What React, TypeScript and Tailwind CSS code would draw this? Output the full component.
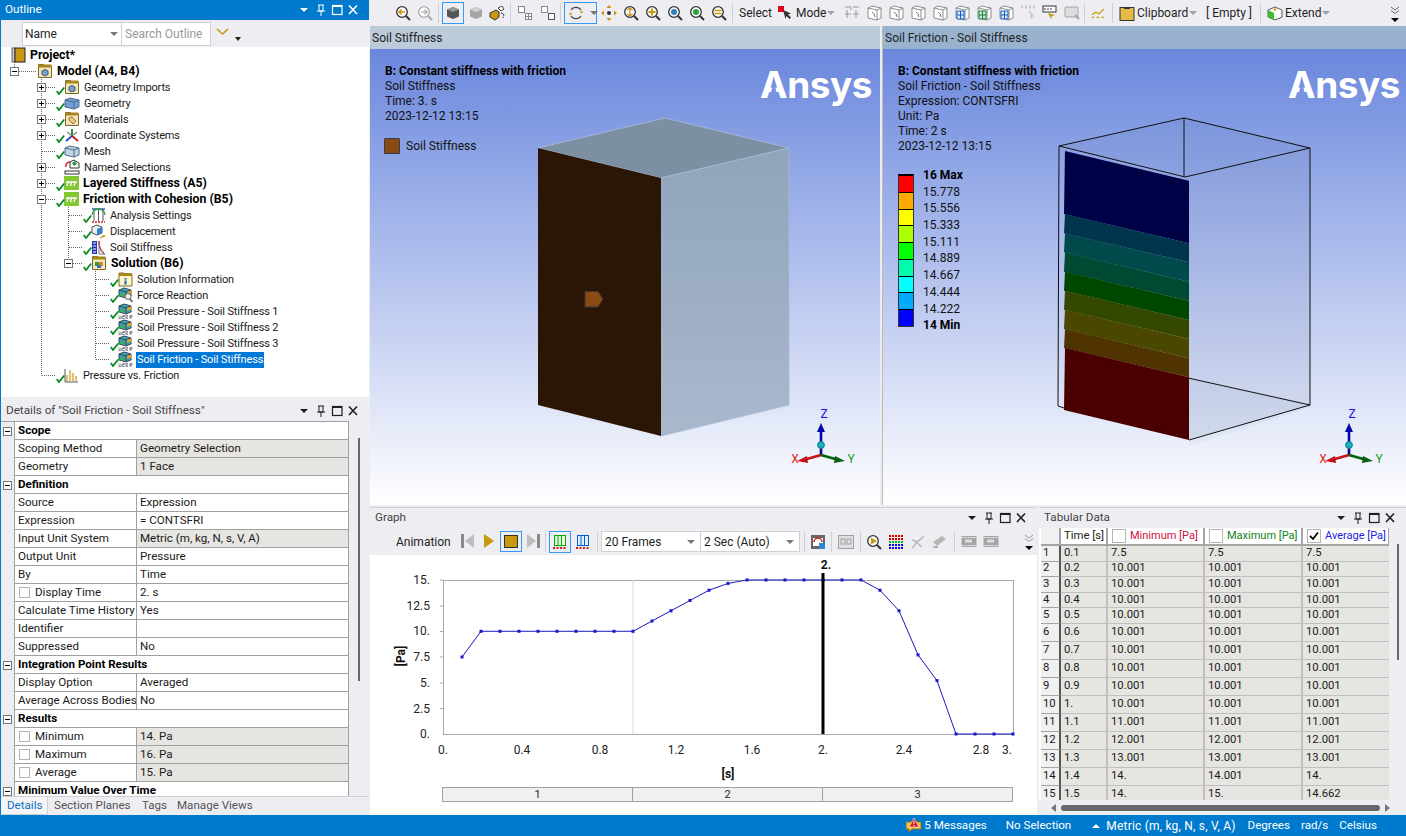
import React from "react";

const FONT = "font-['Roboto','Noto_Sans','Liberation_Sans',sans-serif]";

function Check({ x = 0 }: { x?: number }) {
  return (
    <svg width="9" height="9" viewBox="0 0 9 9" className="absolute" style={{ left: x, top: 7 }}>
      <path d="M0.8 5 L3 8 L8.2 1.5" fill="none" stroke="#0a8a1e" strokeWidth="1.8" />
    </svg>
  );
}

type IconKind =
  | "book" | "folderCube" | "folderGeo" | "cubeBlue" | "folderMat" | "coords" | "mesh" | "named" | "greenBar"
  | "analysis" | "disp" | "stiff" | "folderSol" | "info" | "force" | "user" | "chart";

function TreeIcon({ kind }: { kind: IconKind }) {
  const c = "shrink-0";
  const folder = (inner: React.ReactNode) => (
    <svg width="16" height="16" viewBox="0 0 16 16" className={c}>
      <path d="M1.5 1.5h5l1 1.5h7v11.5h-13z" fill="#f5e6b8" stroke="#7a6a30" />
      <rect x="1.5" y="1.5" width="13" height="3" fill="#a8861c" />
      {inner}
    </svg>
  );
  switch (kind) {
    case "book":
      return (
        <svg width="15" height="16" viewBox="0 0 15 16" className={c}>
          <rect x="1" y="1" width="3" height="14" fill="#c8c8c8" stroke="#666" />
          <rect x="4" y="1" width="10" height="14" fill="#c8980f" stroke="#222" />
        </svg>
      );
    case "folderCube":
    case "folderGeo":
      return folder(<path d="M5 8l3-1.5 3 1.5v3.5l-3 1.5-3-1.5z" fill="#7ba0c8" stroke="#37567a" />);
    case "folderMat":
      return folder(<path d="M5 7l3-1 4 4-3 3-4-4z" fill="#e8c48a" stroke="#a07830" />);
    case "folderSol":
      return folder(
        <g>
          <rect x="4" y="7" width="4" height="4" fill="#3a9a3a" />
          <rect x="8" y="7" width="4" height="4" fill="#d88a20" />
          <rect x="6" y="10" width="4" height="3" fill="#3070c0" />
        </g>,
      );
    case "cubeBlue":
    case "mesh":
      return (
        <svg width="16" height="13" viewBox="0 0 16 13" className={c}>
          <path d="M1 3l5-2 9 2-0 7-5 2-9-2z" fill={kind === "mesh" ? "#c3d3e4" : "#6f9fd4"} stroke="#4c6a8c" />
          <path d="M1 3l9 2 5-2M10 5v7" fill="none" stroke="#4c6a8c" />
        </svg>
      );
    case "coords":
      return (
        <svg width="16" height="16" viewBox="0 0 16 16" className={c}>
          <path d="M8 9V2" stroke="#2a9a3a" strokeWidth="2" />
          <path d="M8 9L2 14" stroke="#2a50c8" strokeWidth="2" />
          <path d="M8 9l6 5" stroke="#d02020" strokeWidth="2" />
          <path d="M3 5l4 3M13 5L9 8" stroke="#888" strokeWidth="1.5" />
        </svg>
      );
    case "named":
      return (
        <svg width="16" height="16" viewBox="0 0 16 16" className={c}>
          <path d="M6 3l4-2 5 3v5H6z" fill="#fff" stroke="#333" />
          <path d="M8 4l3-2 2 3-3 2z" fill="#2a9a3a" />
          <path d="M2 8a4 4 0 014-5" fill="none" stroke="#d02020" strokeWidth="1.5" />
          <rect x="1" y="12" width="14" height="3" fill="#fff" stroke="#333" />
        </svg>
      );
    case "greenBar":
      return (
        <svg width="15" height="14" viewBox="0 0 15 14" className={c}>
          <rect width="15" height="14" fill="#82c832" />
          <path d="M2 6h11M4 6l-1 4M7.5 6l-1 4M11 6l-1 4" stroke="#fff" strokeWidth="1.3" fill="none" />
        </svg>
      );
    case "analysis":
      return (
        <svg width="15" height="15" viewBox="0 0 15 15" className={c}>
          <path d="M1 1h13" stroke="#1030d0" strokeWidth="1.2" />
          <path d="M3 1v12M7.5 1v12M12 1v12" stroke="#555" />
          <path d="M1 7a6.5 6 0 0113 0" fill="none" stroke="#20a040" strokeWidth="1.3" />
          <path d="M1 14h13" stroke="#d02020" strokeWidth="1.3" strokeDasharray="2 1" />
        </svg>
      );
    case "disp":
      return (
        <svg width="15" height="15" viewBox="0 0 15 15" className={c}>
          <path d="M1 3l5-2 5 2v6l-5 2-5-2z" fill="#eee" stroke="#555" />
          <path d="M6 5l5-2v6l-5 2z" fill="#3080d0" />
          <path d="M9 14l5-2-3 0" stroke="#c8980f" strokeWidth="1.3" fill="none" />
        </svg>
      );
    case "stiff":
      return (
        <svg width="15" height="15" viewBox="0 0 15 15" className={c}>
          <rect x="1" y="1" width="5" height="13" fill="#2030c0" />
          <path d="M2 3h3M2 6h3M2 9h3M2 12h3" stroke="#fff" />
          <path d="M8 1c0 8 2 12 6 13H8z" fill="none" stroke="#777" />
          <path d="M8 1c0 6 2 9 5 12" fill="none" stroke="#c03030" />
        </svg>
      );
    case "info":
      return (
        <svg width="15" height="15" viewBox="0 0 15 15" className={c}>
          <path d="M1 1h5l1 1.5h7V14H1z" fill="#fdf5c8" stroke="#7a6a30" />
          <rect x="1" y="1" width="13" height="3" fill="#a8861c" />
          <rect x="6.5" y="6" width="2" height="1.5" fill="#1060c0" />
          <rect x="6.5" y="8.5" width="2" height="4" fill="#1060c0" />
        </svg>
      );
    case "force":
    case "user":
      return (
        <svg width="15" height="16" viewBox="0 0 15 16" className={c}>
          <path d="M1 3l5-2 7 2v6l-5 2-7-2z" fill="#2aa8c0" stroke="#445" />
          <path d="M1 3l7 2 5-2" fill="none" stroke="#445" />
          <path d="M8 5v6" stroke="#445" />
          <path d="M9 5l4-1.5v3l-4 1.5z" fill="#e8a020" />
          <path d="M2 6l5 1.5v2.5l-5-1.5z" fill="#40b050" />
          {kind === "force" ? (
            <g>
              <circle cx="10" cy="9.5" r="3" fill="#eee" stroke="#666" />
              <path d="M12 12l2.5 3" stroke="#555" strokeWidth="1.5" />
            </g>
          ) : (
            <path d="M1 12.5v3h2v-3M4.5 12.5h2v1h-2v2h2M8 12.5H10M8 14H10M8 15.5H10M8 12.5v3M12 15.5v-3h2v1.5h-2l2 1.5" fill="none" stroke="#556" strokeWidth=".7" />
          )}
        </svg>
      );
    default:
      return (
        <svg width="15" height="15" viewBox="0 0 15 15" className={c}>
          <path d="M1 1v13h13" fill="none" stroke="#555" />
          <path d="M3 13V7M6 13V2M9 13V5M12 13V8" stroke="#c8980f" strokeWidth="1.2" />
        </svg>
      );
  }
}

type Row = { label: string; pad: string; icon: IconKind; bold?: boolean; check?: number; sel?: boolean };
const tree: Row[] = [
  { label: "Project*", pad: "pl-[10px]", icon: "book", bold: true },
  { label: "Model (A4, B4)", pad: "pl-[36px]", icon: "folderCube", bold: true },
  { label: "Geometry Imports", pad: "pl-[63px]", icon: "folderGeo", check: 55 },
  { label: "Geometry", pad: "pl-[63px]", icon: "cubeBlue", check: 55 },
  { label: "Materials", pad: "pl-[63px]", icon: "folderMat", check: 55 },
  { label: "Coordinate Systems", pad: "pl-[63px]", icon: "coords", check: 55 },
  { label: "Mesh", pad: "pl-[63px]", icon: "mesh", check: 55 },
  { label: "Named Selections", pad: "pl-[63px]", icon: "named" },
  { label: "Layered Stiffness (A5)", pad: "pl-[63px]", icon: "greenBar", bold: true, check: 55 },
  { label: "Friction with Cohesion (B5)", pad: "pl-[63px]", icon: "greenBar", bold: true, check: 55 },
  { label: "Analysis Settings", pad: "pl-[90px]", icon: "analysis", check: 82 },
  { label: "Displacement", pad: "pl-[90px]", icon: "disp", check: 82 },
  { label: "Soil Stiffness", pad: "pl-[90px]", icon: "stiff", check: 82 },
  { label: "Solution (B6)", pad: "pl-[90px]", icon: "folderSol", bold: true, check: 82 },
  { label: "Solution Information", pad: "pl-[117px]", icon: "info", check: 109 },
  { label: "Force Reaction", pad: "pl-[117px]", icon: "force", check: 109 },
  { label: "Soil Pressure - Soil Stiffness 1", pad: "pl-[117px]", icon: "user", check: 109 },
  { label: "Soil Pressure - Soil Stiffness 2", pad: "pl-[117px]", icon: "user", check: 109 },
  { label: "Soil Pressure - Soil Stiffness 3", pad: "pl-[117px]", icon: "user", check: 109 },
  { label: "Soil Friction - Soil Stiffness", pad: "pl-[117px]", icon: "user", check: 109, sel: true },
  { label: "Pressure vs. Friction", pad: "pl-[63px]", icon: "chart", check: 55 },
];

function TreeLines() {
  const box = (x: number, y: number, plus: boolean, k: string) => (
    <g key={k}>
      <rect x={x + 0.5} y={y + 0.5} width="8" height="8" fill="#fff" stroke="#777" />
      <path d={`M${x + 2} ${y + 4.5}h5`} stroke="#000" />
      {plus && <path d={`M${x + 4.5} ${y + 2}v5`} stroke="#000" />}
    </g>
  );
  const dots = { stroke: "#666", strokeDasharray: "1 1", fill: "none" };
  const top = 47;
  const rowY = (i: number) => 8 + i * 16;
  return (
    <svg width="370" height="340" className="absolute left-0 top-0 pointer-events-none">
      <g {...dots}>
        <path d={`M13.5 ${62 - top}v5`} />
        <path d={`M40.5 ${rowY(1) + 6}V${rowY(20) + 0.5}`} />
        <path d={`M67.5 ${rowY(9) + 6}V${rowY(13)}`} />
        <path d={`M94.5 ${rowY(13) + 6}V${rowY(19) + 0.5}`} />
        <path d={`M18 ${rowY(1) + 0.5}h17`} />
        {[2, 3, 4, 5, 6, 7, 8, 9, 20].map((i) => (
          <path key={i} d={`M41 ${rowY(i) + 0.5}h14`} />
        ))}
        {[10, 11, 12, 13].map((i) => (
          <path key={i} d={`M68 ${rowY(i) + 0.5}h14`} />
        ))}
        {[14, 15, 16, 17, 18, 19].map((i) => (
          <path key={i} d={`M95 ${rowY(i) + 0.5}h14`} />
        ))}
      </g>
      {box(9, rowY(1) - 4, false, "m")}
      {[2, 3, 4, 5, 7, 8].map((i) => box(36, rowY(i) - 4, true, "a" + i))}
      {box(36, rowY(9) - 4, false, "f")}
      {box(63, rowY(13) - 4, false, "s")}
    </svg>
  );
}

function Outline() {
  return (
    <div className="relative bg-white h-[350px] overflow-hidden leading-4">
      <TreeLines />
      <div className="relative">
        {tree.map((r) => (
          <div key={r.label} className={`relative flex items-center h-4 gap-[3px] ${r.pad}`}>
            {r.check !== undefined && <Check x={r.check} />}
            <TreeIcon kind={r.icon} />
            <span
              className={`px-[1px] whitespace-nowrap ${r.bold ? "font-bold text-black text-[12.3px]" : "text-[#1a1a1a] text-[11px] tracking-[-0.15px] h-4 translate-y-px"} ${
                r.sel ? "bg-[#0078d7] text-white" : ""
              }`}
            >
              {r.label}
            </span>
          </div>
        ))}
      </div>
    </div>
  );
}

function PanelButtons({ dark }: { dark?: boolean }) {
  const col = dark ? "#fff" : "#1e1e1e";
  return (
    <svg width="60" height="14" viewBox="0 0 60 14" className="shrink-0">
      <path d="M1 5h8l-4 4z" fill={col} />
      <path d="M19 2h6M20 2v6h4V2M18 8h8M22 8v5" stroke={col} fill="none" />
      <rect x="33.5" y="2.5" width="9.5" height="9" fill="none" stroke={col} strokeWidth="1.2" />
      <path d="M33 3h10" stroke={col} strokeWidth="2" />
      <path d="M50 2.5l8 8.5M58 2.5l-8 8.5" stroke={col} strokeWidth="1.6" />
    </svg>
  );
}

function Title({ text, active, cls = "" }: { text: string; active?: boolean; cls?: string }) {
  return (
    <div
      className={`flex items-center h-5 pl-[5px] pr-[10px] gap-[4px] shrink-0 text-[11.7px] ${
        active ? "bg-[#007acc] text-white" : "bg-[#eeeef2] text-[#444]"
      } ${cls}`}
    >
      <span className="whitespace-nowrap">{text}</span>
      <div
        className={`flex-1 h-[5px] bg-[radial-gradient(circle,#9a9aa0_0.6px,transparent_0.7px)] bg-[length:2px_2px] ${
          active ? "opacity-60" : ""
        }`}
      />
      <PanelButtons dark={active} />
    </div>
  );
}

function Grip() {
  return <div className="w-[5px] h-5 mx-[2px] bg-[radial-gradient(circle,#8a8a8a_0.6px,transparent_0.7px)] bg-[length:2px_2px] shrink-0" />;
}
function Sep({ cls = "mx-[3px]" }: { cls?: string }) {
  return <div className={`w-px h-[20px] bg-[#cfcfd6] shrink-0 ${cls}`} />;
}
function Caret({ light }: { light?: boolean }) {
  return <span className={`inline-block w-0 h-0 border-x-[4px] border-x-transparent border-t-[4px] ${light ? "border-t-[#a0a0a8]" : "border-t-[#777]"} shrink-0`} />;
}

function Mag({ color = "#c8980f", inner, dim }: { color?: string; inner?: React.ReactNode; dim?: boolean }) {
  const s = dim ? "#a8a8a8" : "#333";
  return (
    <svg width="16" height="16" viewBox="0 0 16 16" className="shrink-0">
      <circle cx="7" cy="7" r="5.3" fill="#fff" stroke={s} strokeWidth="1.3" />
      {inner ?? <path d="M3.5 7h7" stroke={dim ? "#bbb" : color} strokeWidth="2" />}
      <path d="M11 11l4 4" stroke={s} strokeWidth="2" />
    </svg>
  );
}

function Cube({ fill = "#555", top = "#999", dim }: { fill?: string; top?: string; dim?: boolean }) {
  return (
    <svg width="14" height="14" viewBox="0 0 14 14" className={dim ? "shrink-0 opacity-60" : "shrink-0"}>
      <path d="M1 3.5L7 1l6 2.5v7L7 13l-6-2.5z" fill={fill} />
      <path d="M1 3.5L7 1l6 2.5L7 6z" fill={top} />
    </svg>
  );
}

function GrayIcon({ k }: { k: number }) {
  return (
    <svg width="17" height="16" viewBox="0 0 17 16" className="shrink-0">
      <path d="M2 3l4-2 9 2v10l-4 2-9-2z" fill="#fff" stroke="#8c8c8c" />
      <path d="M2 3l9 2 4-2M11 5v10" fill="none" stroke="#8c8c8c" />
      {k === 1 && <path d="M3 6l5 1v6l-5-1z" fill="#bbb" />}
      {k === 2 && <path d="M3 6h7v8H3z" fill="#dfe8f5" stroke="#1060c0" />}
      {k === 2 && <path d="M6.5 6v8M3 10h7" stroke="#1060c0" />}
      {k === 3 && <path d="M3 6h7v8H3z" fill="#cfe8cf" stroke="#108040" />}
      {k === 3 && <path d="M6.5 6v8M3 10h7" stroke="#108040" />}
      {k === 0 && <path d="M6 7l3 3-1 0 1 2" stroke="#777" fill="none" />}
    </svg>
  );
}

function MainToolbar() {
  return (
    <div className="flex items-center h-[26px] bg-[#eeeef2] pl-[10px] pr-[3px] shrink-0 text-[12px] text-[#1e1e1e]">
      <Grip />
      <div className="flex items-center gap-[6px] ml-[6px]">
        <Mag inner={<path d="M10 7H4M6.5 4.5L4 7l2.5 2.5" fill="none" stroke="#c8980f" strokeWidth="1.6" />} />
        <Mag dim inner={<path d="M4 7h6M7.5 4.5L10 7l-2.5 2.5" fill="none" stroke="#bbb" strokeWidth="1.6" />} />
      </div>
      <Sep cls="ml-[5px] mr-[3px]" />
      <div className="flex items-center justify-center w-[22px] h-[22px] border border-[#3399ff]">
        <Cube />
      </div>
      <div className="flex items-center gap-[6px] ml-[5px]">
        <Cube fill="#a5a5a5" top="#cfcfcf" />
        <svg width="16" height="16" viewBox="0 0 16 16" className="shrink-0">
          <path d="M1 8l6-3 3 2v5l-4 3-5-3z" fill="#c8980f" stroke="#333" />
          <path d="M9 3l4-2 2 3-3 2z" fill="#fff" stroke="#444" />
          <path d="M12 8l3 1-1 4" stroke="#333" fill="none" strokeDasharray="2 1" />
        </svg>
      </div>
      <Sep cls="ml-[5px] mr-[6px]" />
      <div className="flex items-center gap-[7px]">
        <svg width="16" height="16" viewBox="0 0 16 16" className="shrink-0">
          <rect x="1.5" y="1.5" width="6" height="6" fill="#fff" stroke="#888" />
          <rect x="8.5" y="8.5" width="6" height="6" fill="#fff" stroke="#888" />
          <path d="M11.5 8.5v6M8.5 11.5h6" stroke="#888" />
        </svg>
        <svg width="16" height="16" viewBox="0 0 16 16" className="shrink-0">
          <rect x="1.5" y="1.5" width="6" height="6" fill="#fff" stroke="#888" />
          <rect x="8.5" y="8.5" width="6" height="6" fill="#fff" stroke="#555" />
        </svg>
      </div>
      <Sep cls="ml-[4px] mr-[3px]" />
      <div className="flex items-center gap-[6px] w-[33px] h-[22px] pl-[3px] border border-[#3399ff]">
        <svg width="16" height="16" viewBox="0 0 16 16" className="shrink-0">
          <path d="M3 5a6 6 0 0110 0M13 11a6 6 0 01-10 0" fill="none" stroke="#444" strokeWidth="1.3" />
          <circle cx="2.5" cy="9" r="1.2" fill="#c8980f" />
          <circle cx="13.5" cy="7" r="1.2" fill="#c8980f" />
        </svg>
        <Caret />
      </div>
      <div className="flex items-center gap-[6px] ml-[4px]">
        <svg width="16" height="16" viewBox="0 0 16 16" className="shrink-0">
          <circle cx="8" cy="8" r="2" fill="#333" />
          <path d="M8 0l2.5 3h-5zM8 16l2.5-3h-5zM0 8l3 2.5v-5zM16 8l-3 2.5v-5z" fill="#c8980f" />
        </svg>
        <Mag inner={<path d="M7 3.5v7M4.5 5L7 3l2.5 2M4.5 9L7 11l2.5-2" fill="none" stroke="#c8980f" strokeWidth="1.3" />} />
        <Mag inner={<path d="M3.5 7h7M7 3.5v7" stroke="#c8980f" strokeWidth="2" />} />
        <Mag inner={<circle cx="7" cy="7" r="3" fill="#3080c0" />} />
        <Mag inner={<circle cx="7" cy="7" r="3" fill="#30a040" />} />
        <Mag inner={<path d="M3.5 5.5h7M3.5 8.5h7" stroke="#c8980f" strokeWidth="1.6" />} />
      </div>
      <Sep cls="ml-[5px] mr-[6px]" />
      <span className="w-[32px]">Select</span>
      <svg width="14" height="14" viewBox="0 0 14 14" className="shrink-0 ml-[7px]">
        <rect x="0" y="0" width="6" height="6" fill="#e8001c" />
        <path d="M5 4l8 3.5-3 1 3 3-1.5 1.5-3-3-1 3z" fill="#333" />
      </svg>
      <span className="ml-[4px] w-[31px]">Mode</span>
      <Caret light />
      <div className="flex items-center gap-[5px] ml-[9px]">
        <svg width="17" height="16" viewBox="0 0 17 16" className="shrink-0">
          <path d="M1 2h6v3M9 2h6M1 9h6M9 9h6M3 5v8M12 5v8" stroke="#999" fill="none" />
        </svg>
        {[0, 0, 0, 0, 2, 3, 2].map((k, i) => (
          <GrayIcon key={i} k={k} />
        ))}
        <svg width="17" height="16" viewBox="0 0 17 16" className="shrink-0">
          <path d="M9 6l4 5-2 0 1 3" stroke="#c8c8c8" fill="none" strokeWidth="1.5" />
          <path d="M1 2h14" stroke="#c8c8c8" strokeDasharray="2 2" strokeWidth="3" />
        </svg>
        <svg width="17" height="16" viewBox="0 0 17 16" className="shrink-0">
          <rect x="1" y="1" width="13" height="6" fill="#fff" stroke="#333" />
          <path d="M3 3v2M6 3v2M9 3v2" stroke="#333" />
          <path d="M6 8l3 6 1-3 3-1z" fill="#c8980f" />
        </svg>
        <svg width="17" height="16" viewBox="0 0 17 16" className="shrink-0">
          <rect x="1" y="2" width="13" height="10" rx="1" fill="#ddd" stroke="#a5a5a5" />
          <path d="M11 10l4 4" stroke="#a5a5a5" strokeWidth="2" />
        </svg>
      </div>
      <Sep cls="ml-[3px] mr-[6px]" />
      <svg width="16" height="14" viewBox="0 0 20 14" className="shrink-0">
        <path d="M1 9l5-3 4 2 6-6" stroke="#c8980f" fill="none" strokeWidth="1.5" />
        <path d="M1 12.5h18" stroke="#c8980f" strokeWidth="1.5" strokeDasharray="3 3" />
      </svg>
      <Sep cls="ml-[5px] mr-[6px]" />
      <svg width="16" height="15" viewBox="0 0 16 15" className="shrink-0">
        <rect x="1" y="1.5" width="14" height="13" fill="#e4bb46" stroke="#333" />
        <path d="M5 2h6" stroke="#333" strokeWidth="2" />
      </svg>
      <span className="ml-[2px] w-[52px]">Clipboard</span>
      <Caret light />
      <span className="ml-[9px] w-[47px] whitespace-nowrap">[ Empty ]</span>
      <Sep cls="ml-[7px] mr-[6px]" />
      <svg width="16" height="16" viewBox="0 0 16 16" className="shrink-0">
        <path d="M1 5l7-3 7 3v7l-7 3-7-3z" fill="#fff" stroke="#555" />
        <path d="M1 5l6 3v7l-6-3z" fill="#36c030" />
        <path d="M8 3v3M6.5 4.5h3" stroke="#c89000" />
      </svg>
      <span className="ml-[2px] w-[37px]">Extend</span>
      <Caret light />
      <div className="flex-1" />
      <svg width="12" height="20" viewBox="0 0 12 20" className="shrink-0 mr-[2px]">
        <path d="M2 4l4 3 4-3M2 7.5l4 3 4-3" fill="none" stroke="#666" />
        <path d="M2 15h8l-4 4z" fill="#000" />
      </svg>
    </div>
  );
}

function AnsysLogo({ cls = "" }: { cls?: string }) {
  return (
    <div className={`absolute top-[14px] text-white font-['Inter',sans-serif] font-bold text-[37px] leading-[44px] tracking-[-0.5px] ${cls}`}>
      Ansys
      <svg width="28" height="44" viewBox="0 0 28 44" className="absolute left-0 top-0">
        <path d="M9 36.5L18.5 36.5L13.8 19Z" fill="#7993e0" />
      </svg>
    </div>
  );
}

function Triad({ cls }: { cls: string }) {
  return (
    <svg width="76" height="60" viewBox="0 0 76 60" className={`absolute ${cls}`}>
      <path d="M36 48V22" stroke="#0606b0" strokeWidth="2.6" />
      <path d="M32 25l4-9 4 9z" fill="#0606b0" />
      <path d="M36 48L20 52.5" stroke="#c41414" strokeWidth="2.6" />
      <path d="M22 49l-10 5 11 2z" fill="#c41414" />
      <path d="M36 48l16 4.5" stroke="#0a5e10" strokeWidth="2.6" />
      <path d="M50 49l10 5-11 2z" fill="#0a5e10" />
      <circle cx="36" cy="38" r="3.4" fill="#14b8c4" stroke="#0a7a86" />
      <text x="39" y="11" fontSize="12" textAnchor="middle" fontFamily="Roboto" fill="#1414f0">Z</text>
      <text x="10" y="56" fontSize="12" textAnchor="middle" fontFamily="Roboto" fill="#e02020">X</text>
      <text x="66" y="56" fontSize="12" textAnchor="middle" fontFamily="Roboto" fill="#18a018">Y</text>
    </svg>
  );
}

function Viewport({ title, titleBg, children, cls }: { title: string; titleBg: string; children: React.ReactNode; cls: string }) {
  return (
    <div className={`flex flex-col min-w-0 ${cls}`}>
      <div className={`h-[23px] shrink-0 flex items-center pl-[2px] text-[12px] text-[#222] ${titleBg}`}>{title}</div>
      <div className="relative flex-1 overflow-hidden bg-[linear-gradient(180deg,#6a87dd_0%,#ffffff_100%)] text-[12px] leading-[15px] text-[#111]">
        {children}
      </div>
    </div>
  );
}

function BoxOne() {
  return (
    <svg width="510" height="456" viewBox="370 49 510 456" className="absolute left-0 top-0">
      <defs>
        <linearGradient id="rf" x1="0" x2="0" y1="0" y2="1">
          <stop offset="0" stopColor="#90a4bb" />
          <stop offset="1" stopColor="#a9b8cd" />
        </linearGradient>
      </defs>
      <path d="M538 148L665 118L789 148L661 178Z" fill="#7d8fa2" stroke="#a8bdd8" strokeWidth=".8" />
      <path d="M661 178L789 148V405L661 436Z" fill="url(#rf)" stroke="#a8bdd8" strokeWidth=".8" />
      <path d="M538 148L661 178V436L538 405Z" fill="#2b1505" />
      <path d="M585 291.5h13l5 7.5-5 8h-13z" fill="#8a4b12" stroke="#3a3a3a" />
    </svg>
  );
}

function BoxTwo() {
  const left = [151, 214, 233.3, 252.3, 271.7, 290.7, 309.7, 329, 348, 410];
  const right = [180.7, 243.3, 262.3, 281.7, 300.7, 320, 339, 358.3, 377.3, 440];
  const cols = ["#000047", "#00354d", "#004a4c", "#004a33", "#004800", "#344800", "#4a4800", "#4f3300", "#4a0000"];
  return (
    <svg width="523" height="456" viewBox="883 49 523 456" className="absolute left-0 top-0">
      <path d="M1059 146L1184 118L1310 148L1185 177Z" fill="#5c74b0" fillOpacity=".12" />
      <path d="M1185 177L1310 148V405L1189 440Z" fill="#6078a8" fillOpacity=".11" />
      <path d="M1184 378L1316 405L1189 446Z" fill="#5c74b0" fillOpacity=".06" />
      {cols.map((c, i) => (
        <path key={c} d={`M1065 ${left[i]}L1189 ${right[i]}V${right[i + 1]}L1064 ${left[i + 1]}Z`} fill={c} />
      ))}
      <path
        d="M1059 146L1184 118L1310 148L1185 177L1059 146ZM1184 118V177M1310 148V405L1189 440M1059 146L1058 406L1064 408M1188 378L1310 405"
        fill="none"
        stroke="#111"
        strokeWidth="1"
      />
    </svg>
  );
}

const legend = [
  { c: "bg-[#ff0000]", t: "16 Max", b: true },
  { c: "bg-[#ffaa00]", t: "15.778" },
  { c: "bg-[#ffff00]", t: "15.556" },
  { c: "bg-[#aaff00]", t: "15.333" },
  { c: "bg-[#00ff00]", t: "15.111" },
  { c: "bg-[#00ffaa]", t: "14.889" },
  { c: "bg-[#00ffff]", t: "14.667" },
  { c: "bg-[#00aaff]", t: "14.444" },
  { c: "bg-[#0000ff]", t: "14.222" },
];

function Legend() {
  return (
    <div className="absolute left-[15px] top-[118px] flex gap-[9px]">
      <div className="flex flex-col w-[16px] border border-[#333] border-t-[2px] border-t-black bg-black gap-px mt-[7px] h-[153px]">
        {legend.map((l) => (
          <div key={l.t} className={`flex-1 ${l.c}`} />
        ))}
      </div>
      <div className="flex flex-col">
        {legend.map((l) => (
          <div key={l.t} className={`h-[16.7px] leading-[16.7px] whitespace-nowrap ${l.b ? "font-bold text-black" : ""}`}>
            {l.t}
          </div>
        ))}
        <div className="h-[16px] leading-[16px] font-bold text-black">14 Min</div>
      </div>
    </div>
  );
}

const details: { a?: string; b?: string; h?: string; gray?: boolean; cb?: boolean }[] = [
  { h: "Scope" },
  { a: "Scoping Method", b: "Geometry Selection", gray: true },
  { a: "Geometry", b: "1 Face", gray: true },
  { h: "Definition" },
  { a: "Source", b: "Expression" },
  { a: "Expression", b: "= CONTSFRI" },
  { a: "Input Unit System", b: "Metric (m, kg, N, s, V, A)", gray: true },
  { a: "Output Unit", b: "Pressure" },
  { a: "By", b: "Time" },
  { a: "Display Time", b: "2. s", cb: true },
  { a: "Calculate Time History", b: "Yes" },
  { a: "Identifier", b: "" },
  { a: "Suppressed", b: "No" },
  { h: "Integration Point Results" },
  { a: "Display Option", b: "Averaged" },
  { a: "Average Across Bodies", b: "No" },
  { h: "Results" },
  { a: "Minimum", b: "14. Pa", gray: true, cb: true },
  { a: "Maximum", b: "16. Pa", gray: true, cb: true },
  { a: "Average", b: "15. Pa", gray: true, cb: true },
  { h: "Minimum Value Over Time" },
];

function Details() {
  return (
    <div className="flex flex-1 min-h-0 overflow-hidden bg-[#eeeef2] text-[11.6px] leading-none">
      <div className="w-[348px] shrink-0 border-t border-t-[#a0a0a0] pl-[13px] [&>div]:-ml-[13px]">
        {details.map((d, i) =>
          d.h ? (
            <div key={i} className="flex h-[18px]">
              <div className="w-[13px] shrink-0 bg-[#eeeef2] flex items-center pl-[2px]">
                <span className="relative block w-[9px] h-[9px] border border-[#777] bg-white after:absolute after:left-[1px] after:right-[1px] after:top-[3px] after:h-px after:bg-black" />
              </div>
              <div className="flex-1 bg-white border-l border-l-[#a0a0a0] border-b border-b-[#a0a0a0] border-r border-r-[#a0a0a0] pl-[3px] flex items-center font-bold text-black">
                {d.h}
              </div>
            </div>
          ) : (
            <div key={i} className="flex h-[18px]">
              <div className="w-[13px] shrink-0 bg-[#eeeef2]" />
              <div className="w-[123px] shrink-0 bg-white border-l border-l-[#a0a0a0] border-b border-b-[#a0a0a0] border-r border-r-[#a0a0a0] pl-[3px] flex items-center gap-[5px] whitespace-nowrap overflow-hidden text-[#1a1a1a]">
                {d.cb && <span className="ml-[1px] block w-[11px] h-[11px] border border-[#b5b5b5] bg-white shrink-0" />}
                {d.a}
              </div>
              <div
                className={`flex-1 border-b border-b-[#a0a0a0] border-r border-r-[#a0a0a0] pl-[3px] flex items-center whitespace-nowrap text-[#1a1a1a] ${
                  d.gray ? "bg-[#e6e5e1]" : "bg-white"
                }`}
              >
                {d.b}
              </div>
            </div>
          ),
        )}
      </div>
      <div className="flex-1 pl-[9px] pt-[17px]">
        <div className="w-[2px] h-[243px] bg-[#686868]" />
      </div>
    </div>
  );
}

function Tabs() {
  return (
    <div className="flex h-[19px] shrink-0 bg-[#eeeef2] border-t border-t-[#cfcfd6] text-[11.6px] text-[#555] items-stretch">
      <div className="w-[47px] pl-[6px] flex items-center text-[#0e70c0] bg-[#f5f5f7] border-r border-b border-[#cfcfd6]">Details</div>
      <div className="ml-[6px] w-[88px] flex items-center whitespace-nowrap">Section Planes</div>
      <div className="w-[35px] flex items-center">Tags</div>
      <div className="flex items-center whitespace-nowrap">Manage Views</div>
    </div>
  );
}

function Combo({ text, cls }: { text: string; cls: string }) {
  return (
    <div className={`flex items-center justify-between h-[21px] bg-white border border-[#cfcfd6] pl-[3px] pr-[5px] text-[12px] text-[#1e1e1e] ${cls}`}>
      <span className="whitespace-nowrap">{text}</span>
      <Caret />
    </div>
  );
}

function GraphToolbar() {
  const gray = "#9a9a9a";
  return (
    <div className="flex items-center h-[27px] shrink-0 bg-[#eeeef2] pl-[10px] pr-[2px] text-[12px] text-[#1e1e1e]">
      <Grip />
      <span className="ml-[7px] w-[57px]">Animation</span>
      <svg width="84" height="21" viewBox="0 0 84 21" className="shrink-0 ml-[8px]">
        <rect x="0" y="3" width="3" height="14" fill="#8a8a8a" />
        <path d="M13 3v14l-9-7z" fill="#bdbdbd" />
        <path d="M23 3v14l10-7z" fill="#c8980f" />
        <rect x="39.5" y="0.5" width="21" height="20" fill="none" stroke="#3399ff" />
        <rect x="43.5" y="4.5" width="13" height="12" fill="#c8980f" stroke="#333" />
        <path d="M66 3v14l9-7z" fill="#bdbdbd" />
        <rect x="76" y="3" width="3" height="14" fill="#8a8a8a" />
      </svg>
      <Sep cls="mr-[3px]" />
      <div className="flex items-center justify-center w-[22px] h-[22px] border border-[#3399ff]">
        <svg width="16" height="16" viewBox="0 0 16 16">
          <rect x="2.5" y="1.5" width="11" height="10" fill="#e6ffe6" stroke="#00b000" />
          <path d="M6 1.5v10M9.5 1.5v10" stroke="#00b000" />
          <path d="M1 14h14" stroke="#d02020" strokeWidth="2" strokeDasharray="2 1.5" />
        </svg>
      </div>
      <svg width="16" height="16" viewBox="0 0 16 16" className="shrink-0 ml-[4px]">
        <rect x="2.5" y="1.5" width="11" height="10" fill="#e0f0ff" stroke="#0060d0" />
        <path d="M6 1.5v10M9.5 1.5v10" stroke="#0060d0" />
        <path d="M1 14h14" stroke="#d02020" strokeWidth="2" strokeDasharray="2 1.5" />
      </svg>
      <Sep cls="ml-[6px] mr-[3px]" />
      <Combo text="20 Frames" cls="w-[100px]" />
      <Combo text="2 Sec (Auto)" cls="w-[100px] -ml-[1px]" />
      <Sep cls="ml-[4px] mr-[5px]" />
      <svg width="16" height="16" viewBox="0 0 16 16" className="shrink-0">
        <rect x="1" y="1" width="14" height="14" fill="#666" />
        <rect x="3" y="4" width="10" height="8" fill="#fff" />
        <path d="M4 8a4 4 0 018 0" stroke="#d02020" fill="none" strokeWidth="1.5" />
        <rect x="9" y="9" width="6" height="6" fill="#2f88d8" />
      </svg>
      <Sep cls="ml-[5px] mr-[6px]" />
      <svg width="16" height="14" viewBox="0 0 16 14" className="shrink-0">
        <rect x="0.5" y="0.5" width="15" height="13" fill="#e0e0e0" stroke="#a0a0a0" />
        <rect x="3" y="4" width="4" height="5" fill="none" stroke="#a0a0a0" />
        <rect x="9" y="4" width="4" height="5" fill="none" stroke="#a0a0a0" />
      </svg>
      <Sep cls="ml-[6px] mr-[5px]" />
      <div className="flex items-center gap-[6px]">
        <Mag inner={<path d="M5 3.5v7l6-3.5z" fill="#c8980f" />} />
        <svg width="16" height="16" viewBox="0 0 16 16" className="shrink-0">
          <path d="M1 2h14M1 5h14" stroke="#e00000" strokeWidth="2" strokeDasharray="2 1" />
          <path d="M1 8h14" stroke="#00c000" strokeWidth="2" strokeDasharray="2 1" />
          <path d="M1 11h14M1 14h14" stroke="#0000e0" strokeWidth="2" strokeDasharray="2 1" />
        </svg>
        <svg width="16" height="16" viewBox="0 0 16 16" className="shrink-0">
          <path d="M2 14c3-1 3-6 6-7s3-3 6-5M2 6c3 0 6 4 10 7" stroke="#b5b5b5" fill="none" strokeWidth="1.5" />
        </svg>
        <svg width="16" height="16" viewBox="0 0 16 16" className="shrink-0">
          <path d="M1 8l9-6 4 3-9 7z" fill="#b5b5b5" />
          <path d="M1 13h5" stroke="#b5b5b5" strokeWidth="2" />
        </svg>
      </div>
      <Sep cls="ml-[6px] mr-[6px]" />
      <div className="flex items-center gap-[6px]">
        {[0, 1].map((i) => (
          <svg key={i} width="16" height="16" viewBox="0 0 16 16" className="shrink-0">
            <rect x="0.5" y="2" width="15" height="11" fill="#a5a5a5" />
            <path d="M0.5 3.5h15M0.5 11.5h15" stroke="#eee" strokeDasharray="2 1" />
            <rect x="4" y="5.5" width="7" height="3" fill="#ddd" />
          </svg>
        ))}
      </div>
      <div className="flex-1" />
      <svg width="12" height="20" viewBox="0 0 12 20" className="shrink-0">
        <path d="M2 3l4 3 4-3M2 6.5l4 3 4-3" fill="none" stroke={gray} />
        <path d="M2 14h8l-4 4z" fill="#000" />
      </svg>
    </div>
  );
}

function Chart() {
  const pts = [
    [0.1, 7.5], [0.2, 10.001], [0.3, 10.001], [0.4, 10.001], [0.5, 10.001], [0.6, 10.001], [0.7, 10.001], [0.8, 10.001], [0.9, 10.001], [1, 10.001],
    [1.1, 11.001], [1.2, 12.001], [1.3, 13.001], [1.4, 14], [1.5, 14.662], [1.6, 15], [1.7, 15], [1.8, 15], [1.9, 15], [2, 15], [2.1, 15], [2.2, 15],
    [2.3, 14], [2.4, 12], [2.5, 7.7], [2.6, 5.2], [2.7, 0], [2.8, 0], [2.9, 0], [3, 0],
  ];
  const X = (t: number) => 443 + t * 190;
  const Y = (v: number) => 734 - v * 10.27;
  const yt = ["15.", "12.5", "10.", "7.5", "5.", "2.5", "0."];
  const xt: [string, number][] = [["0.", 443], ["0.4", 522], ["0.8", 600], ["1.2", 676], ["1.6", 752], ["2.", 823], ["2.4", 904], ["2.8", 981], ["3.", 1007]];
  return (
    <svg width="666" height="226" viewBox="370 555 666 226" className="block shrink-0" fontFamily="Roboto" fontSize="12">
      <rect x="443.5" y="580.5" width="570" height="154" fill="none" stroke="#a8a8a8" />
      <path d="M443 580h-3M443 606h-3M443 631.5h-3M443 657h-3M443 683h-3M443 708.5h-3" stroke="#a8a8a8" />
      <path d="M633 580v154" stroke="#dcdcdc" />
      <polyline points={pts.map((p) => `${X(p[0])},${Y(p[1])}`).join(" ")} fill="none" stroke="#1818c8" strokeWidth="1" />
      {pts.map((p) => (
        <rect key={p[0]} x={X(p[0]) - 1.5} y={Y(p[1]) - 1.5} width="3" height="3" fill="#1818c8" />
      ))}
      <rect x="821.5" y="573" width="3" height="161" fill="#000" />
      <text x="826" y="569" fontWeight="700" textAnchor="middle" fill="#111">2.</text>
      {yt.map((t, i) => (
        <text key={t} x="430" y={584 + i * 25.7} textAnchor="end" fill="#222">{t}</text>
      ))}
      {xt.map(([t, x]) => (
        <text key={t} x={x} y="754" textAnchor="middle" fill="#222">{t}</text>
      ))}
      <text x="728" y="778" fontWeight="700" textAnchor="middle" fill="#111">[s]</text>
      <text transform="translate(405 656) rotate(-90)" fontWeight="700" textAnchor="middle" fill="#111">[Pa]</text>
    </svg>
  );
}

function Graph() {
  return (
    <div className="flex flex-col w-[667px] shrink-0 min-h-0">
      <Title text="Graph" cls="border-t border-t-[#cfcfd6] !h-[21px]" />
      <GraphToolbar />
      <div className="flex-1 bg-white flex flex-col min-h-0">
        <Chart />
        <div className="flex ml-[72px] w-[571px] h-[15px] border border-[#a0a0a0] bg-[#f0f0f0] text-[11px] leading-[13px] text-center text-[#222] shrink-0 mt-[6px]">
          <div className="flex-1 border-r border-r-[#a0a0a0]">1</div>
          <div className="flex-1 border-r border-r-[#a0a0a0]">2</div>
          <div className="flex-1">3</div>
        </div>
      </div>
    </div>
  );
}

const rows: string[][] = [
  ["1", "0.1", "7.5", "7.5", "7.5"],
  ["2", "0.2", "10.001", "10.001", "10.001"],
  ["3", "0.3", "10.001", "10.001", "10.001"],
  ["4", "0.4", "10.001", "10.001", "10.001"],
  ["5", "0.5", "10.001", "10.001", "10.001"],
  ["6", "0.6", "10.001", "10.001", "10.001"],
  ["7", "0.7", "10.001", "10.001", "10.001"],
  ["8", "0.8", "10.001", "10.001", "10.001"],
  ["9", "0.9", "10.001", "10.001", "10.001"],
  ["10", "1.", "10.001", "10.001", "10.001"],
  ["11", "1.1", "11.001", "11.001", "11.001"],
  ["12", "1.2", "12.001", "12.001", "12.001"],
  ["13", "1.3", "13.001", "13.001", "13.001"],
  ["14", "1.4", "14.", "14.001", "14."],
  ["15", "1.5", "14.", "15.", "14.662"],
];

function HeadCell({ text, color, w, checked }: { text: string; color: string; w: string; checked?: boolean }) {
  return (
    <div className={`${w} shrink-0 flex items-center gap-[4px] pl-[4px] border-r-2 border-r-[#a5a5a5] border-b-2 border-b-[#a5a5a5] whitespace-nowrap text-[11px] ${color}`}>
      <span className="flex items-center justify-center w-[14px] h-[14px] border border-[#b5b5b5] bg-white shrink-0">
        {checked && (
          <svg width="10" height="10" viewBox="0 0 10 10">
            <path d="M1 5l3 3 5-6.5" fill="none" stroke="#000" strokeWidth="1.8" />
          </svg>
        )}
      </span>
      {text}
    </div>
  );
}

function Tabular() {
  return (
    <div className="flex flex-col flex-1 min-w-0 min-h-0 ml-[2px]">
      <Title text="Tabular Data" cls="border-t border-t-[#cfcfd6] !h-[21px] pl-[3px]" />
      <div className="flex flex-1 min-h-0 bg-[#eeeef2]">
        <div className="flex flex-col w-[350px] shrink-0 min-h-0 pl-[2px] bg-white text-[11.3px] text-[#1a1a1a] overflow-hidden">
          <div className="flex h-[18px] shrink-0 bg-white">
            <div className="w-[20px] shrink-0 border-r-2 border-r-[#a5a5a5] border-b-2 border-b-[#a5a5a5] bg-[#f0f0f0]" />
            <div className="w-[47px] shrink-0 flex items-center pl-[3px] whitespace-nowrap border-r-2 border-r-[#a5a5a5] border-b-2 border-b-[#a5a5a5]">Time [s]</div>
            <HeadCell w="w-[97px]" text="Minimum [Pa]" color="text-[#d01040]" />
            <HeadCell w="w-[98px]" text="Maximum [Pa]" color="text-[#108020]" />
            <HeadCell w="w-[87px]" text="Average [Pa]" color="text-[#2020e0]" checked />
          </div>
          {rows.map((r, i) => (
            <div key={r[0]} className={`flex shrink-0 ${i < 5 ? "h-[15.6px]" : "h-[18px]"}`}>
              <div className="w-[20px] shrink-0 pl-[2px] flex items-center bg-[#f0f0f0] border-b border-b-[#a5a5a5] border-r-2 border-r-[#555]">{r[0]}</div>
              <div className="w-[47px] shrink-0 pl-[3px] flex items-center bg-[#e6e5e1] border-b border-b-[#c0c0c0] border-r-2 border-r-[#c0c0c0]">{r[1]}</div>
              <div className="w-[97px] shrink-0 pl-[3px] flex items-center bg-[#e6e5e1] border-b border-b-[#c0c0c0] border-r-2 border-r-[#c0c0c0]">{r[2]}</div>
              <div className="w-[98px] shrink-0 pl-[3px] flex items-center bg-[#e6e5e1] border-b border-b-[#c0c0c0] border-r-2 border-r-[#c0c0c0]">{r[3]}</div>
              <div className="w-[87px] shrink-0 pl-[3px] flex items-center bg-[#e6e5e1] border-b border-b-[#c0c0c0]">{r[4]}</div>
            </div>
          ))}
        </div>
        <div className="flex-1 pl-[8px] pt-[16px]">
          <div className="w-[2px] h-[116px] bg-[#686868]" />
        </div>
      </div>
      <div className="flex items-center h-[15px] shrink-0 bg-[#eeeef2] pl-[12px] pr-[16px] gap-[2px]">
        <span className="w-0 h-0 border-y-[4px] border-y-transparent border-r-[5px] border-r-[#777]" />
        <div className="flex-1 h-[6px] rounded-[3px] bg-[#686868] mx-[3px]" />
        <span className="w-0 h-0 border-y-[4px] border-y-transparent border-l-[5px] border-l-[#777]" />
      </div>
    </div>
  );
}

function StatusBar() {
  return (
    <div className="flex items-center justify-end h-[21px] shrink-0 bg-[#007acc] text-white text-[11.6px] pr-[29px]">
      <svg width="17" height="15" viewBox="0 0 17 15" className="shrink-0">
        <path d="M0 4h15v7H6l-3 3v-3H0z" fill="#f0c040" stroke="#a07020" />
        <path d="M8 0l5 9H3z" fill="#d02020" stroke="#fff" strokeWidth=".6" />
        <path d="M8 3v3M8 7v1" stroke="#fff" />
      </svg>
      <span className="ml-[1px]">5 Messages</span>
      <span className="ml-[19px]">No Selection</span>
      <span className="ml-[21px] w-0 h-0 border-x-[4px] border-x-transparent border-b-[4px] border-b-white" />
      <span className="ml-[6px] text-[12px] tracking-[0.2px]">Metric (m, kg, N, s, V, A)</span>
      <span className="ml-[12px]">Degrees</span>
      <span className="ml-[11px]">rad/s</span>
      <span className="ml-[11px]">Celsius</span>
    </div>
  );
}

export default function App() {
  return (
    <div className={`w-[1406px] h-[836px] flex flex-col overflow-hidden bg-[#eeeef2] ${FONT}`}>
      <div className="flex flex-1 min-h-0 border-l-[1px] border-l-[#007acc]">
        <div className="w-[368px] shrink-0 flex flex-col min-h-0">
          <Title text="Outline" active cls="-ml-[1px]" />
          <div className="flex items-center h-[27px] shrink-0 bg-[#eeeef2] text-[12px] pl-[8px]">
            <Grip />
            <div className="flex items-center justify-between w-[100px] h-[24px] ml-[4px] bg-white border border-[#cfcfd6] pl-[2px] pr-[3px] text-[#1e1e1e]">
              Name <Caret />
            </div>
            <div className="flex items-center w-[90px] h-[24px] -ml-px bg-white border border-[#cfcfd6] pl-[3px] text-[#9a9a9a] whitespace-nowrap overflow-hidden">Search Outline</div>
            <svg width="13" height="8" viewBox="0 0 13 8" className="ml-[5px] shrink-0 -mt-[3px]">
              <path d="M1 1l5.5 5L12 1" fill="none" stroke="#c8980f" strokeWidth="1.6" />
            </svg>
            <svg width="6" height="4" viewBox="0 0 6 4" className="ml-[6px] shrink-0 mt-[10px]">
              <path d="M0 0h6L3 4z" fill="#222" />
            </svg>
          </div>
          <Outline />
          <div className="h-[4px] shrink-0" />
          <Title text={'Details of "Soil Friction - Soil Stiffness"'} />
          <Details />
          <Tabs />
        </div>
        <div className="flex-1 min-w-0 flex flex-col pl-[1px]">
          <MainToolbar />
          <div className="flex h-[479px] shrink-0">
            <Viewport title="Soil Stiffness" titleBg="bg-[#bccbd9]" cls="w-[510px] shrink-0">
              <BoxOne />
              <div className="absolute left-[15px] top-[15px] whitespace-nowrap">
                <div className="font-bold text-black">B: Constant stiffness with friction</div>
                <div>Soil Stiffness</div>
                <div>Time: 3. s</div>
                <div>2023-12-12 13:15</div>
              </div>
              <div className="absolute left-[14px] top-[89px] flex items-center gap-[6px] whitespace-nowrap">
                <span className="block w-[16px] h-[16px] bg-[#8a4b12] border border-[#3a3a4a] rounded-[1px]" />
                Soil Stiffness
              </div>
              <AnsysLogo cls="right-[8px]" />
              <Triad cls="left-[415px] top-[358px]" />
            </Viewport>
            <div className="w-[3px] shrink-0 bg-[#ececec] border-r border-r-[#bbb]" />
            <Viewport title="Soil Friction - Soil Stiffness" titleBg="bg-[#99b3cf]" cls="flex-1">
              <BoxTwo />
              <div className="absolute left-[15px] top-[15px] whitespace-nowrap">
                <div className="font-bold text-black">B: Constant stiffness with friction</div>
                <div>Soil Friction - Soil Stiffness</div>
                <div>Expression: CONTSFRI</div>
                <div>Unit: Pa</div>
                <div>Time: 2 s</div>
                <div>2023-12-12 13:15</div>
              </div>
              <Legend />
              <AnsysLogo cls="right-[6px]" />
              <Triad cls="left-[430px] top-[358px]" />
            </Viewport>
          </div>
          <div className="flex flex-1 min-h-0 pt-[2px]">
            <Graph />
            <Tabular />
          </div>
        </div>
      </div>
      <StatusBar />
    </div>
  );
}
